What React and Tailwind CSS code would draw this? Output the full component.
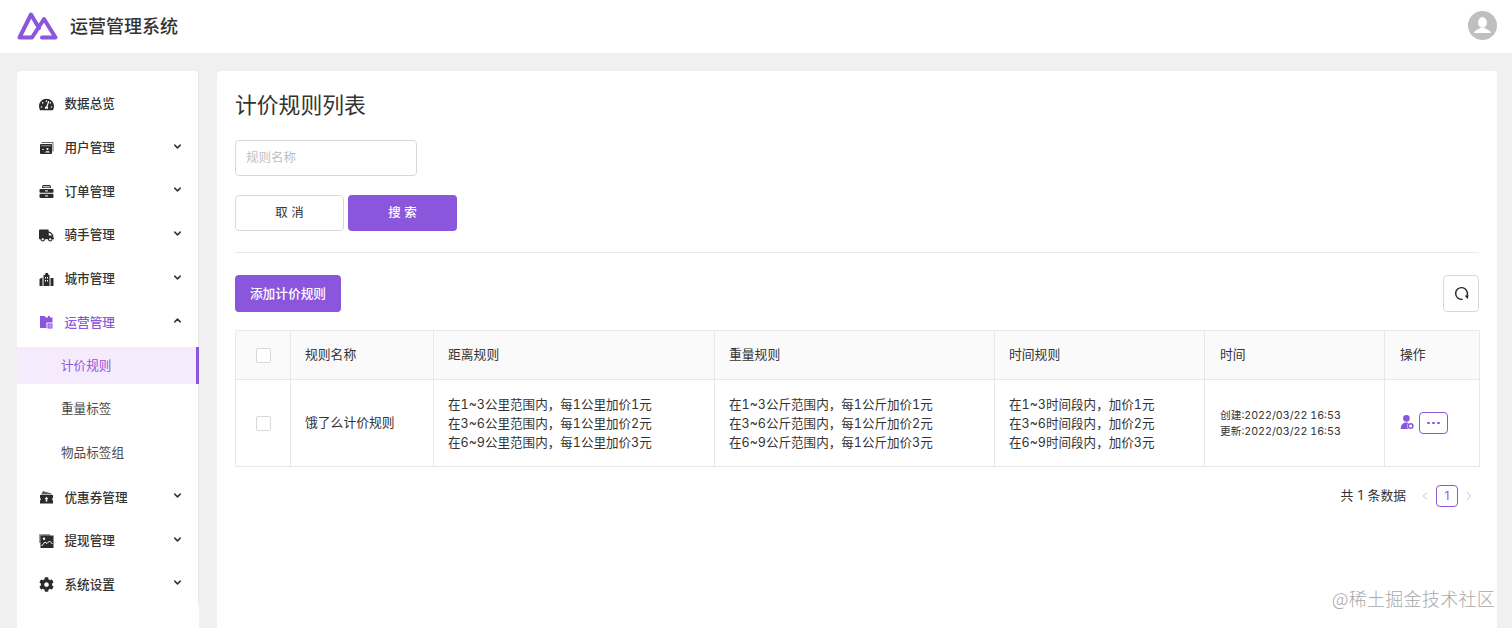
import React from "react";
import { FaTachometerAlt, FaTruck, FaCog } from "react-icons/fa";
import { ChevronDown, ChevronUp, ChevronLeft, ChevronRight } from "lucide-react";

const font = 'Inter, "Noto Sans CJK SC", sans-serif';

function Logo() {
  return (
    <svg width="41" height="28" viewBox="0 0 41 28" fill="none" className="-mt-[2px]">
      <path d="M25 25.5 H38.5 L27 7 L15 25.5 H2.5 L14 2.5 L22 16" stroke="#8a56dc" strokeWidth="4" strokeLinejoin="round" strokeLinecap="round" />
    </svg>
  );
}

function Avatar() {
  return (
    <div className="w-[29px] h-[29px] -mt-[2px] rounded-full bg-[#bfbfbf] overflow-hidden flex items-center justify-center">
      <svg width="29" height="29" viewBox="0 0 29 29">
        <ellipse cx="14.5" cy="11.5" rx="4.4" ry="5.4" fill="#fff" />
        <path d="M6 22 C7 19 10 18.5 12.5 17 L16.5 17 C19 18.5 22 19 23 22 Z" fill="#fff" />
      </svg>
    </div>
  );
}

const UserIcon = ({ className }) => (
  <svg viewBox="0 0 15 15" className={className}>
    <path d="M2.5 1.5 H14 V10.5" fill="none" stroke="currentColor" strokeWidth="1" opacity="0.7" />
    <rect x="1" y="3" width="12" height="10" rx="1" fill="currentColor" />
    <rect x="2.2" y="4.2" width="9.6" height="1" fill="#fff" opacity="0.5" />
    <circle cx="8.5" cy="8" r="1.1" fill="#fff" />
    <path d="M6 11.5 C6.3 9.8 10.7 9.8 11 11.5 Z" fill="#fff" />
    <rect x="3" y="8" width="2" height="1" fill="#fff" opacity="0.7" />
  </svg>
);

const CaseIcon = ({ className }) => (
  <svg viewBox="0 0 15 15" className={className}>
    <path d="M3 4 C3 1.5 4 1 5 1 H10 C11 1 12 1.5 12 4 Z" fill="currentColor" />
    <rect x="4.2" y="2.3" width="6.6" height="1" fill="#fff" />
    <rect x="0.5" y="5" width="14" height="3.8" rx="0.8" fill="currentColor" />
    <rect x="0.5" y="9.8" width="14" height="4.2" rx="1" fill="currentColor" />
    <rect x="6" y="6.4" width="3" height="1" fill="#fff" />
    <rect x="6" y="11.4" width="3" height="1" fill="#fff" />
  </svg>
);

const CityIcon = ({ className }) => (
  <svg viewBox="0 0 15 15" className={className}>
    <path d="M0.5 14 V7 L3.5 5.5 V14 Z" fill="currentColor" />
    <path d="M4.5 14 V3 L6 3 L6.5 1 H9 L9.5 3 H10.5 V14 Z" fill="currentColor" />
    <path d="M11.5 14 V6 H14.5 V14 Z" fill="currentColor" />
    <rect x="6" y="5" width="1" height="1.5" fill="#fff" />
    <rect x="8" y="5" width="1" height="1.5" fill="#fff" />
    <rect x="6" y="8" width="1" height="1.5" fill="#fff" />
    <rect x="8" y="8" width="1" height="1.5" fill="#fff" />
  </svg>
);

const FolderIcon = ({ className }) => (
  <svg viewBox="0 0 15 15" className={className}>
    <path d="M1 1 H5.5 L7 2.5 H9 V1 H11 V2.5 H13.5 V7.5 H7.5 V13 H1 Z" fill="currentColor" />
    <rect x="8.5" y="8.5" width="5" height="5" fill="currentColor" />
    <rect x="9.7" y="9.7" width="1" height="1" fill="#fff" />
    <rect x="11.5" y="9.7" width="1" height="1" fill="#fff" />
    <rect x="9.7" y="11.5" width="1" height="1" fill="#fff" />
    <rect x="11.5" y="11.5" width="1" height="1" fill="#fff" />
  </svg>
);

const CouponIcon = ({ className }) => (
  <svg viewBox="0 0 15 15" className={className}>
    <path d="M2 4.5 L4 1 L12.5 3.5 L13 4.5 Z" fill="currentColor" opacity="0.75" />
    <path d="M1 5 H14 V8 A1.4 1.4 0 0 0 14 10.6 V13.5 H1 V10.6 A1.4 1.4 0 0 0 1 8 Z" fill="currentColor" />
    <path d="M7.5 6.8 L9.3 9 H8.3 V11.5 H6.7 V9 H5.7 Z" fill="#fff" />
  </svg>
);

const PicIcon = ({ className }) => (
  <svg viewBox="0 0 15 15" className={className}>
    <rect x="0" y="0" width="11" height="9" fill="currentColor" opacity="0.45" />
    <rect x="1.5" y="1.5" width="13" height="12.5" fill="currentColor" />
    <circle cx="5" cy="4.8" r="1.2" fill="#fff" />
    <path d="M2.5 12 L6 8 L8 9.5 L10.5 7 L13.5 10" fill="none" stroke="#fff" strokeWidth="1" />
  </svg>
);

const UserGear = () => (
  <svg width="16" height="16" viewBox="0 0 16 16" className="shrink-0">
    <circle cx="6.4" cy="3.4" r="3.3" fill="#8a56dc" />
    <path d="M0.7 14 C0.7 10 3 7.6 6.4 7.6 C8.6 7.6 10.4 8.6 11 10 L11 14 Z" fill="#8a56dc" />
    <circle cx="10.6" cy="11" r="3.4" fill="#fff" />
    <circle cx="10.6" cy="11" r="2.3" fill="none" stroke="#8a56dc" strokeWidth="1.5" />
  </svg>
);

const menu = [
  { label: "数据总览", Icon: FaTachometerAlt },
  { label: "用户管理", Icon: UserIcon, arrow: "down" },
  { label: "订单管理", Icon: CaseIcon, arrow: "down" },
  { label: "骑手管理", Icon: FaTruck, arrow: "down" },
  { label: "城市管理", Icon: CityIcon, arrow: "down" },
  { label: "运营管理", Icon: FolderIcon, arrow: "up", active: true },
  { label: "计价规则", sub: true, current: true },
  { label: "重量标签", sub: true },
  { label: "物品标签组", sub: true },
  { label: "优惠券管理", Icon: CouponIcon, arrow: "down" },
  { label: "提现管理", Icon: PicIcon, arrow: "down" },
  { label: "系统设置", Icon: FaCog, arrow: "down" },
];

function MenuItem({ item }) {
  const { label, Icon, arrow, active, sub, current } = item;
  if (sub) {
    return (
      <div className="h-[43.7px] flex items-center -mr-px">
        <div className={`h-[37px] w-full flex items-center pl-[44px] text-[12.6px] border-r-[3px] ${current ? "bg-[#f6ebfd] text-[#8a56dc] border-[#8a56dc]" : "text-[#4a4a4a] border-transparent"}`}>
          {label}
        </div>
      </div>
    );
  }
  return (
    <div className="h-[43.7px] flex items-center pl-[21.5px] pr-[15px]">
      <Icon className={`w-[15px] h-[15px] mt-[1px] shrink-0 ${active ? "text-[#8a56dc]" : "text-[#2b2b2b]"}`} />
      <span className={`ml-[11px] mt-[2px] text-[12.6px] font-medium flex-1 ${active ? "text-[#8a56dc]" : "text-[#333]"}`}>{label}</span>
      {arrow === "down" && <ChevronDown className="w-[11px] h-[11px] -mt-[3px] text-[#333]" strokeWidth={3.2} />}
      {arrow === "up" && <ChevronUp className="w-[11px] h-[11px] -mt-[3px] text-[#333]" strokeWidth={3.2} />}
    </div>
  );
}

function Checkbox() {
  return <span className="block w-[15px] h-[15px] mx-auto bg-white border border-[#d9d9d9] rounded-[2px]" />;
}

const Lines = ({ lines }) => (
  <div className="leading-[19px] text-[12.55px] tabular-nums">
    {lines.map((l) => <div key={l}>{l}</div>)}
  </div>
);

const th = "font-normal text-left text-[12.8px] text-[#333] border-r border-b border-[#e8e8e8] px-[14px]";
const td = "text-[12.8px] text-[#333] border-r border-b border-[#e8e8e8] px-[14px]";

export default function App() {
  return (
    <div className="relative h-[628px] overflow-hidden bg-[#f0f0f0] flex flex-col" style={{ fontFamily: font }}>
      <header className="h-[54px] shrink-0 bg-white flex items-center pl-[17px] pr-[15px] border-b border-[#ececec]">
        <Logo />
        <span className="ml-[12px] text-[18px] font-medium text-[#333]">运营管理系统</span>
        <div className="ml-auto"><Avatar /></div>
      </header>
      <div className="flex-1 flex pt-[17px] pl-[17px] pr-[15px] gap-[18px] min-h-0">
        <aside className="w-[182px] shrink-0 bg-white rounded-t-[4px]">
          <nav className="h-[534px] pt-[11px] border-r border-[#e8e8e8]">
            {menu.map((m) => <MenuItem key={m.label} item={m} />)}
          </nav>
        </aside>
        <main className="flex-1 bg-white rounded-t-[4px] px-[18px] pt-[19px] min-w-0">
          <h1 className="text-[21.8px] leading-[30px] font-normal text-[#333]">计价规则列表</h1>
          <div className="mt-[20px] w-[182px] h-[36px] border border-[#d9d9d9] rounded-[4px] flex items-center px-[10px] text-[12.5px] text-[#bfbfbf]">规则名称</div>
          <div className="mt-[19px] flex gap-[4px]">
            <button className="w-[109px] h-[36px] border border-[#d9d9d9] rounded-[4px] bg-white text-[12.5px] text-[#333]">取 消</button>
            <button className="w-[109px] h-[36px] rounded-[4px] bg-[#8a56dc] text-[12.5px] font-medium text-white">搜 索</button>
          </div>
          <div className="mt-[21px] border-t border-[#e8e8e8]" />
          <div className="mt-[22px] flex justify-between">
            <button className="w-[106px] h-[37px] rounded-[4px] bg-[#8a56dc] text-[12.7px] font-medium text-white">添加计价规则</button>
            <button className="w-[36px] h-[37px] border border-[#d9d9d9] rounded-[4px] bg-white flex items-center justify-center">
              <svg width="15" height="15" viewBox="0 0 14 14" fill="none">
                <path d="M8 12.4 A5.5 5.5 0 1 1 12.3 8.6" stroke="#222" strokeWidth="1.3" />
                <path d="M10 9.2 L13.6 8.4 L12.8 12.2 Z" fill="#222" />
              </svg>
            </button>
          </div>
          <table className="mt-[18px] w-[1244px] table-fixed border-separate border-spacing-0 border-t border-l border-[#e8e8e8] rounded-t-[2px]">
            <colgroup>
              <col className="w-[55px]" />
              <col className="w-[143px]" />
              <col className="w-[281px]" />
              <col className="w-[280px]" />
              <col className="w-[210px]" />
              <col className="w-[180px]" />
              <col className="w-[95px]" />
            </colgroup>
            <thead>
              <tr className="h-[49px] bg-[#fafafa]">
                <th className={th}><Checkbox /></th>
                <th className={th}>规则名称</th>
                <th className={th}>距离规则</th>
                <th className={th}>重量规则</th>
                <th className={th}>时间规则</th>
                <th className={`${th} !pl-[15px]`}>时间</th>
                <th className={`${th} !pl-[15px]`}>操作</th>
              </tr>
            </thead>
            <tbody>
              <tr className="h-[87px]">
                <td className={td}><Checkbox /></td>
                <td className={td}>饿了么计价规则</td>
                <td className={td}><Lines lines={["在1~3公里范围内，每1公里加价1元", "在3~6公里范围内，每1公里加价2元", "在6~9公里范围内，每1公里加价3元"]} /></td>
                <td className={td}><Lines lines={["在1~3公斤范围内，每1公斤加价1元", "在3~6公斤范围内，每1公斤加价2元", "在6~9公斤范围内，每1公斤加价3元"]} /></td>
                <td className={td}><Lines lines={["在1~3时间段内，加价1元", "在3~6时间段内，加价2元", "在6~9时间段内，加价3元"]} /></td>
                <td className={`${td} !text-[10.7px] !pl-[15px] tabular-nums`}>
                  <div className="leading-[16px] pt-[1px]">
                    <div>创建:2022/03/22 16:53</div>
                    <div>更新:2022/03/22 16:53</div>
                  </div>
                </td>
                <td className={`${td} !pl-[15px]`}>
                  <div className="flex items-center gap-[3px]">
                    <UserGear />
                    <span className="w-[29px] h-[22px] border border-[#8a56dc] rounded-[4px] flex items-center justify-center gap-[2.5px]">
                      <i className="block w-[2.5px] h-[2.5px] rounded-full bg-[#8a56dc]" />
                      <i className="block w-[2.5px] h-[2.5px] rounded-full bg-[#8a56dc]" />
                      <i className="block w-[2.5px] h-[2.5px] rounded-full bg-[#8a56dc]" />
                    </span>
                  </div>
                </td>
              </tr>
            </tbody>
          </table>
          <div className="mt-[18px] flex items-center justify-end pr-[3px] text-[12.8px] text-[#333]">
            <span className="[word-spacing:1px] mr-[1px]">共 1 条数据</span>
            <ChevronLeft className="ml-[11px] w-[14px] h-[14px] text-[#bbbbbb]" strokeWidth={1.6} />
            <span className="ml-[4px] w-[22px] h-[22px] border border-[#8a56dc] rounded-[4px] flex items-center justify-center text-[12px] text-[#8a56dc]">1</span>
            <ChevronRight className="ml-[4px] w-[14px] h-[14px] text-[#bbbbbb]" strokeWidth={1.6} />
          </div>
        </main>
      </div>
      <div className="absolute left-[1332px] top-[587px] text-[18px] leading-[22px] text-[#a8a8a8] tracking-[0.3px]" style={{ fontFamily: '"Noto Sans CJK SC", sans-serif', fontWeight: 300 }}>@稀土掘金技术社区</div>
    </div>
  );
}
